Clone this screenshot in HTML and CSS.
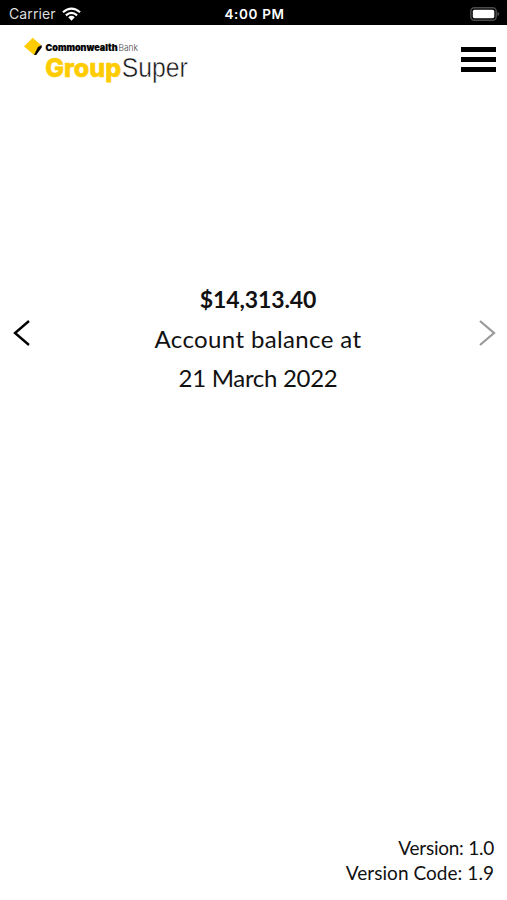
FILE: index.html
```html
<!DOCTYPE html>
<html lang="en">
<head>
<meta charset="utf-8">
<title>Group Super</title>
<link rel="stylesheet" href="styles.css">
</head>
<body>
<div class="status">
  <div class="carrier"><span>Carrier</span>
    <svg class="wifi" viewBox="0 0 20 14"><path d="M1 5.2Q10-2.6 19 5.2M4.1 8.5Q10 3.2 15.9 8.5" fill="none" stroke="#fff" stroke-width="2.3"/><path d="M6.6 10.4Q10 7.5 13.4 10.4L10 14Z" fill="#fff"/></svg>
  </div>
  <span class="time">4:00 PM</span>
  <svg class="battery" viewBox="0 0 30 14"><rect x=".8" y=".8" width="25.4" height="12.4" rx="3.6" fill="none" stroke="#4b4b4b" stroke-width="1.5"/><rect x="2.8" y="2.8" width="21.5" height="8.4" rx="1.6" fill="#fff"/><path d="M27.5 4.8Q31 7 27.5 9.2Z" fill="#555"/></svg>
</div>
<header class="header">
  <svg class="logo" viewBox="0 0 170 52" aria-label="CommonwealthBank GroupSuper">
    <path d="M9.7 4.7L18 12L11.2 22L1 13.5Z" fill="#fc0"/>
    <path d="M15 14L18.7 12V14.4L13.2 22H11Z" fill="#000"/>
    <text class="bank-bold" x="22.5" y="17.6" textLength="72" lengthAdjust="spacingAndGlyphs">Commonwealth</text>
    <text class="bank-light" x="95.5" y="17.6" textLength="19.5" lengthAdjust="spacingAndGlyphs">Bank</text>
    <text class="group" x="22.2" y="43.5" textLength="76" lengthAdjust="spacingAndGlyphs">Group</text>
    <text class="super" x="98.8" y="43.5" textLength="66" lengthAdjust="spacingAndGlyphs">Super</text>
  </svg>
  <div class="menu"><i></i><i></i><i></i></div>
</header>
<main class="main">
  <svg class="arrow" viewBox="0 0 18 28"><path d="M17 2L3 14L17 26" fill="none" stroke="#000" stroke-width="2.4"/></svg>
  <div class="balance">
    <strong class="amount">$14,313.40</strong>
    <span class="label">Account balance at</span>
    <span class="date">21 March 2022</span>
  </div>
  <svg class="arrow" viewBox="0 0 18 28"><path d="M2 2L16 14L2 26" fill="none" stroke="#999" stroke-width="2.2"/></svg>
</main>
<footer class="footer"><span class="version">Version: 1.0</span><span class="code">Version Code: 1.9</span></footer>
</body>
</html>
```
FILE: styles.css
```css
* { box-sizing: border-box; }
body {
  margin: 0;
  height: 900px;
  display: flex;
  flex-direction: column;
  background: #fff;
  color: #111;
  font-family: Lato, sans-serif;
  overflow: hidden;
}
.status {
  height: 25px;
  padding: 2px 7px 0 9px;
  display: grid;
  grid-template-columns: 1fr auto 1fr;
  align-items: center;
  background: #000;
  color: #fff;
  font: 14px/22px Inter, sans-serif;
}
.carrier { display: flex; align-items: center; gap: 6px; color: #ddd; letter-spacing: .1px; }
.wifi { width: 19px; height: 14px; }
.time { font-weight: 600; font-size: 13.5px; letter-spacing: .65px; }
.battery { width: 30px; height: 14px; justify-self: end; }
.header {
  height: 75px;
  padding: 8px 11px 0 23px;
  display: flex;
  justify-content: space-between;
}
.logo { width: 170px; height: 52px; }
.logo text { font-family: Inter, sans-serif; }
.logo .bank-bold { font-size: 9.4px; font-weight: 900; fill: #000; stroke: #000; stroke-width: .2px; }
.logo .bank-light { font-size: 9.4px; font-weight: 300; fill: #444; }
.logo .group { font-size: 26px; font-weight: 800; fill: #fc0; stroke: #fc0; stroke-width: .6px; }
.logo .super { font-family: "Liberation Sans", sans-serif; font-size: 27px; fill: #111; stroke: #fff; stroke-width: .5px; }
.menu { width: 35px; margin-top: 14px; display: flex; flex-direction: column; gap: 5px; }
.menu i { height: 5px; background: #000; }
.main {
  margin-top: 180px;
  padding: 0 11px 0 12px;
  display: flex;
  justify-content: space-between;
}
.arrow { width: 18px; height: 28px; margin-top: 39px; }
.balance {
  display: flex;
  flex-direction: column;
  align-items: center;
  padding-left: 8px;
  font-size: 24px;
  line-height: 39px;
  white-space: nowrap;
}
.amount { font-size: 23px; letter-spacing: -.1px; }
.label { letter-spacing: .37px; }
.date { letter-spacing: -.3px; }
.footer {
  margin-top: auto;
  padding: 0 13px 15px 0;
  display: flex;
  flex-direction: column;
  align-items: flex-end;
  font-size: 19px;
  line-height: 24.5px;
}
.version { letter-spacing: -.25px; }
.code { letter-spacing: .05px; }
```
